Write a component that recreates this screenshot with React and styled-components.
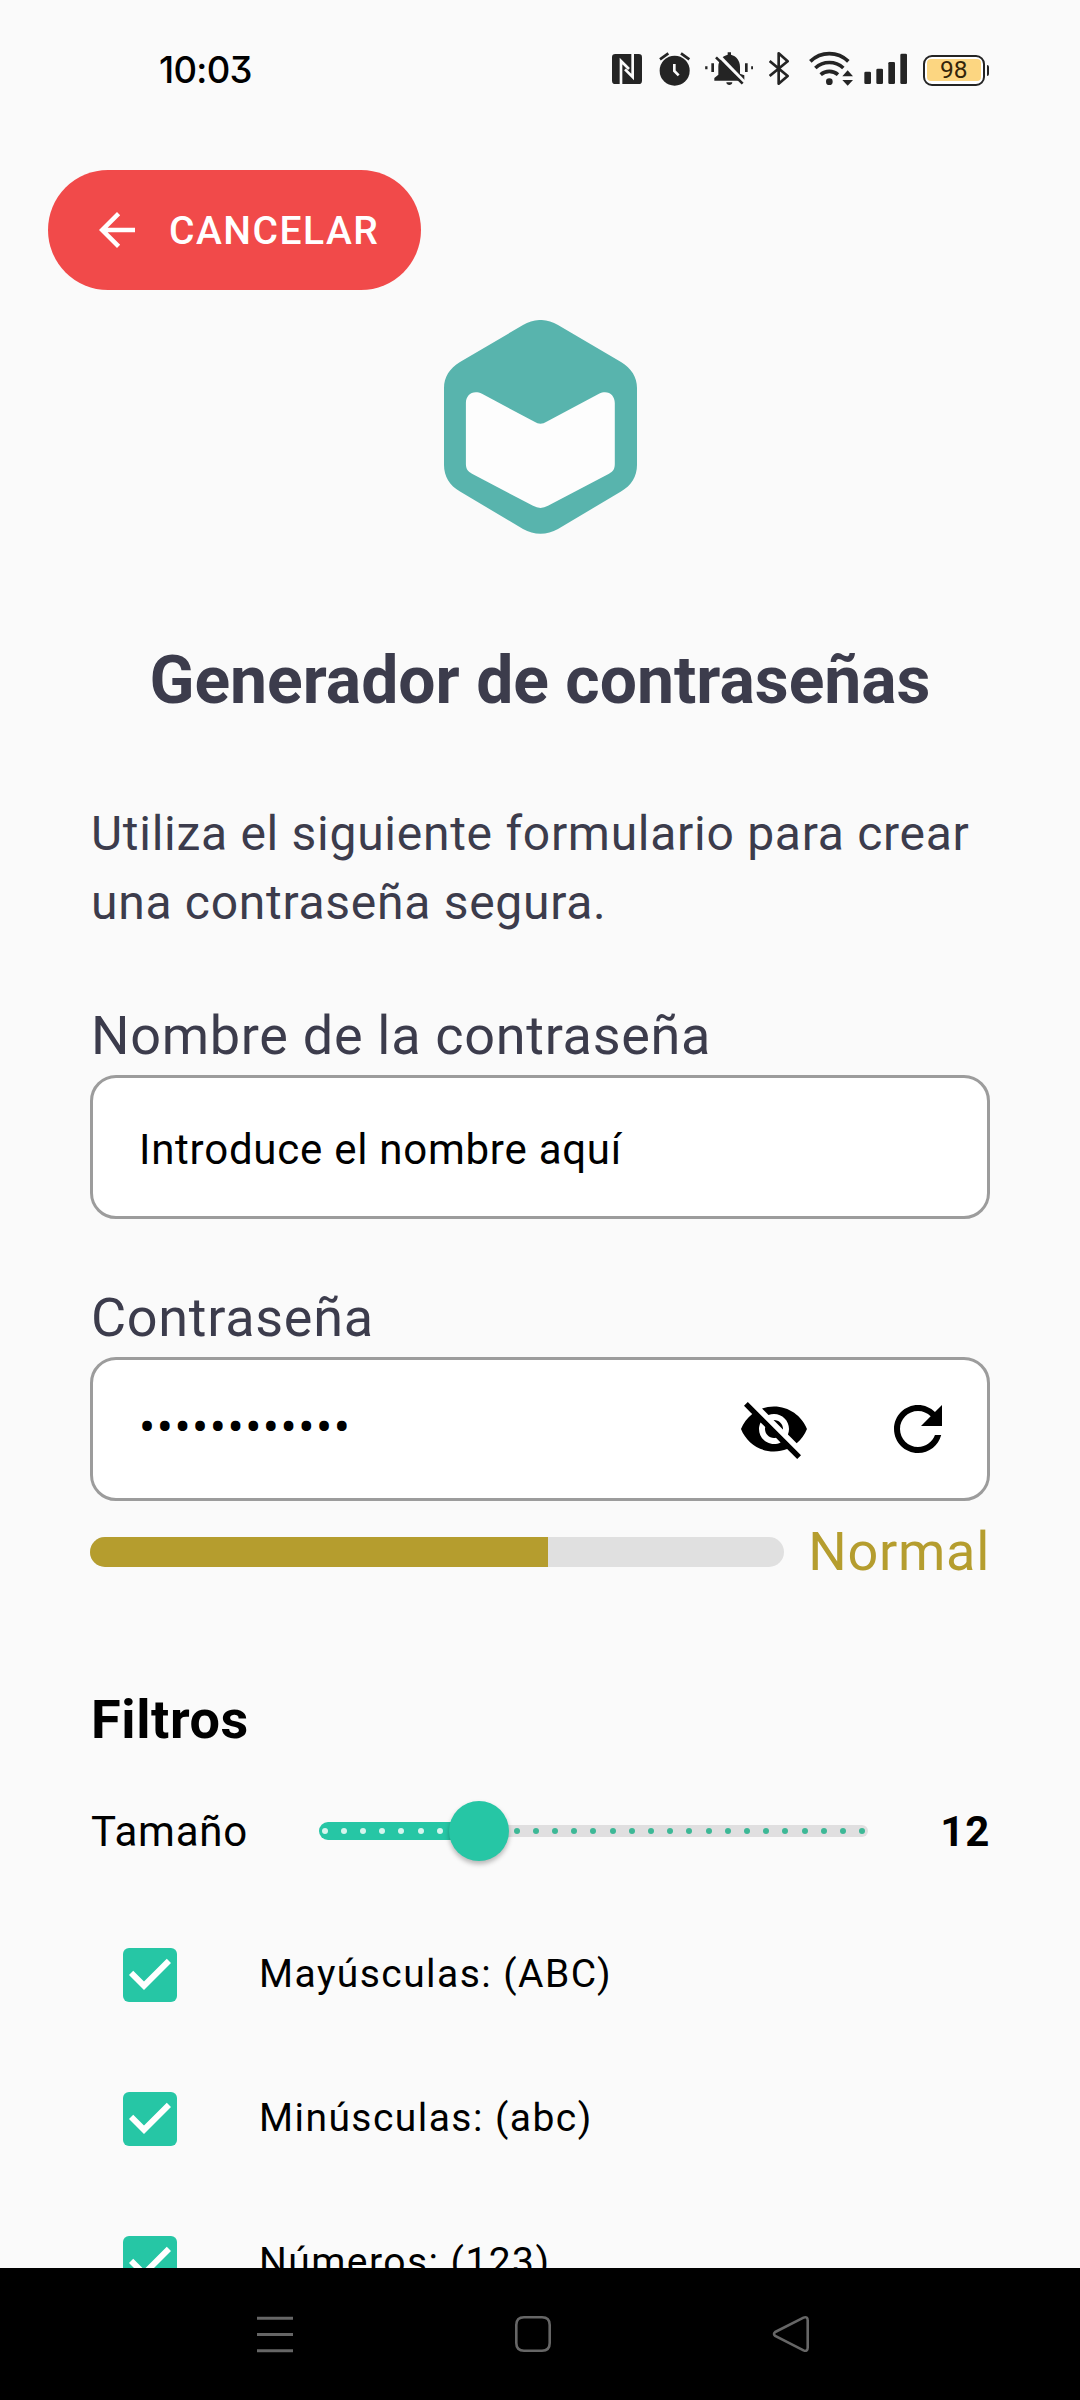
import React from "react";
import styled, { createGlobalStyle } from "styled-components";

const ink = "#3c3c4c";
const teal = "#26c6a5";
const gold = "#b59d2e";
const glyph = "#242424";

const GlobalStyle = createGlobalStyle`
  * { box-sizing: border-box; }
  body { margin: 0; background: #fafafa; font-family: Roboto, "Noto Sans", sans-serif; }
  svg { display: block; flex: none; }
`;

const Phone = styled.div`
  width: 1080px;
  height: 2400px;
  display: flex;
  flex-direction: column;
  overflow: hidden;
  background: #fafafa;
`;

const Screen = styled.div`
  height: 2268px;
  flex: none;
  display: flex;
  flex-direction: column;
  overflow: hidden;
`;

const StatusBar = styled.header`
  height: 140px;
  flex: none;
  padding: 0 91px 0 159px;
  display: flex;
  align-items: center;
  justify-content: space-between;
`;

const Clock = styled.span`
  font: 500 36.5px/44px Inter, Roboto, sans-serif;
  font-feature-settings: "cv09" 1;
  color: #000;
  letter-spacing: -0.7px;
`;

const StatusIcons = styled.div`
  display: flex;
  align-items: center;
`;

const Glyph = styled.svg`
  height: 40px;
  width: ${(p) => p.$w / 3}px;
  margin-right: ${(p) => p.$after / 3}px;
`;

const BatteryCase = styled.div`
  width: 62.5px;
  height: 31px;
  padding: 2.5px;
  border: 2.2px solid #242424;
  border-radius: 9px;
  background: #fff;
`;

const BatteryLevel = styled.div`
  height: 100%;
  border-radius: 4px;
  background: #fcd681;
  display: flex;
  align-items: center;
  justify-content: center;
  font-size: 24.5px;
  line-height: 22px;
  color: #33240a;
`;

const BatteryTip = styled.div`
  width: 2.5px;
  height: 11px;
  margin-left: 1.5px;
  border-radius: 0 2px 2px 0;
  background: #242424;
`;

const CancelButton = styled.button`
  width: 373px;
  height: 120px;
  flex: none;
  margin: 30px 0 0 48px;
  padding: 0 0 0 42px;
  border: 0;
  border-radius: 60px;
  background: #f14a4a;
  color: #fff;
  display: flex;
  align-items: center;
  gap: 25px;
  font: 500 39px/48px Roboto, sans-serif;
  letter-spacing: 1.5px;
`;

const ButtonText = styled.span`
  margin-top: 2px;
`;

const Logo = styled.svg`
  width: 193px;
  height: 214px;
  margin: 30px auto 0 444px;
`;

const Title = styled.h1`
  margin: 108px 0 0;
  text-align: center;
  font-size: 66px;
  font-weight: 700;
  line-height: 78px;
  color: ${ink};
`;

const Form = styled.main`
  padding: 0 90px;
  display: flex;
  flex-direction: column;
`;

const Intro = styled.p`
  margin: 79px -10px 0 1px;
  font-size: 48px;
  line-height: 69px;
  letter-spacing: 0.72px;
  color: ${ink};
`;

const Label = styled.label`
  margin: 67px 0 0 1px;
  font-size: 54px;
  line-height: 63px;
  letter-spacing: 0.7px;
  color: ${ink};
`;

const Field = styled.div`
  height: 144px;
  margin-top: 8px;
  padding: 0 33px 0 46px;
  border: 3px solid #9c9c9c;
  border-radius: 26px;
  background: #fff;
  display: flex;
  align-items: center;
`;

const FieldText = styled.span`
  flex: 1;
  margin-top: 5px;
  font-size: 42px;
  line-height: 50px;
  letter-spacing: 0.75px;
  color: #000;
`;

const Mask = styled.span`
  flex: 1;
  margin-top: -3px;
  font-size: 48px;
  line-height: 56px;
  letter-spacing: 1.5px;
  color: #000;
`;

const FieldActions = styled.div`
  display: flex;
  gap: 72px;
`;

const StrengthRow = styled.div`
  margin-top: 19px;
  height: 63px;
  display: flex;
  align-items: center;
  justify-content: space-between;
`;

const StrengthTrack = styled.div`
  width: 694px;
  height: 30px;
  border-radius: 15px;
  overflow: hidden;
  background: #e0e0e0;
`;

const StrengthFill = styled.div`
  width: ${(p) => p.$percent}%;
  height: 100%;
  background: ${gold};
`;

const StrengthText = styled.span`
  font-size: 54px;
  line-height: 63px;
  letter-spacing: 0.7px;
  color: ${gold};
`;

const SectionTitle = styled.h2`
  margin: 105px 0 0 1px;
  font-size: 54px;
  font-weight: 700;
  line-height: 63px;
  letter-spacing: 0.6px;
  color: #000;
`;

const SizeRow = styled.div`
  margin-top: 50px;
  height: 60px;
  display: grid;
  grid-template-columns: 229px 549px 1fr;
  align-items: center;
  font-size: 42px;
  line-height: 50px;
  letter-spacing: 0.75px;
  color: #000;
`;

const SizeLabel = styled.span`
  padding: 1px 0 0 1px;
`;

const SizeValue = styled.span`
  padding-top: 1px;
  text-align: right;
  font-weight: 700;
`;

const Slider = styled.div`
  position: relative;
  height: 60px;
  display: flex;
  align-items: center;
`;

const ActiveTrack = styled.div`
  width: 160px;
  height: 18px;
  border-radius: 9px 0 0 9px;
  background: ${teal};
`;

const RestTrack = styled.div`
  flex: 1;
  height: 12px;
  border-radius: 0 6px 6px 0;
  background: #e0dfe0;
`;

const Ticks = styled.div`
  position: absolute;
  inset: 27px 2.5px;
  display: flex;
  justify-content: space-between;
`;

const Tick = styled.i`
  width: 6px;
  height: 6px;
  border-radius: 50%;
  background: ${(p) => (p.$on ? "#d6f5ee" : "#3db896")};
`;

const Thumb = styled.div`
  position: absolute;
  left: 129.5px;
  top: 0;
  width: 60px;
  height: 60px;
  border-radius: 50%;
  background: ${teal};
  box-shadow: 0 3px 5px rgba(0, 0, 0, 0.28);
`;

const Options = styled.div`
  margin-top: 42px;
  display: flex;
  flex-direction: column;
`;

const Option = styled.div`
  height: 144px;
  padding-left: 24px;
  display: flex;
  align-items: center;
  gap: 73px;
`;

const OptionText = styled.span`
  margin-top: -3px;
  font-size: 39px;
  line-height: 48px;
  letter-spacing: 1.45px;
  color: #000;
`;

const NavBar = styled.nav`
  height: 132px;
  flex: none;
  padding: 0 270px 0 255px;
  background: #000;
  display: flex;
  align-items: center;
  justify-content: space-between;
`;

const StatusGlyphs = () => (
  <>
    <Glyph $w={90} $after={52} viewBox="96 60 90 120">
      <rect x="96" y="72" width="90" height="90" rx="10" fill={glyph} />
      <path d="M123 164V93L147 117M158 70V141L135 118" fill="none" stroke="#fafafa" strokeWidth="8" />
    </Glyph>
    <Glyph $w={94} $after={42} viewBox="238 60 94 120">
      <circle cx="285" cy="122" r="45" fill={glyph} />
      <path d="M241 88L266 70M329 88L304 70" stroke={glyph} strokeWidth="8" />
      <path d="M284 102V123L297 136" fill="none" stroke="#fafafa" strokeWidth="8" />
    </Glyph>
    <Glyph $w={146} $after={48} viewBox="374 60 146 120">
      <path
        fill={glyph}
        d="M402 152V144L414 134V110C414 92 426 78 442 74V67H452V74C468 78 479 92 479 110V131L492 136V152ZM438 157H456C456 168 438 168 438 157Z"
      />
      <path d="M415 76L496 160" stroke="#fafafa" strokeWidth="10" />
      <path d="M407 82L487 161" stroke={glyph} strokeWidth="8" />
      <path d="M378 109v9M516 109v9" stroke={glyph} strokeWidth="7" />
      <path d="M397 100v26M498 100v26" stroke={glyph} strokeWidth="8" />
    </Glyph>
    <Glyph $w={62} $after={58} viewBox="568 60 62 120">
      <path d="M570 93L624 138L597 161V70L624 94L570 138" fill="none" stroke={glyph} strokeWidth="8" strokeLinejoin="round" />
    </Glyph>
    <Glyph $w={132} $after={32} viewBox="688 60 132 120">
      <path d="M692 94C724 63 774 63 806 94" fill="none" stroke={glyph} strokeWidth="11" />
      <path d="M707 114C731 92 767 92 791 114" fill="none" stroke={glyph} strokeWidth="11" />
      <path d="M723 134C738 121 760 121 775 134" fill="none" stroke={glyph} strokeWidth="11" />
      <circle cx="749" cy="155" r="10" fill={glyph} />
      <path d="M788 139L804 121L820 139ZM788 150H820L804 167Z" fill={glyph} />
    </Glyph>
    <Glyph $w={130} $after={46} viewBox="852 60 130 120">
      <g fill={glyph}>
        <rect x="853" y="125" width="20" height="37" rx="4" />
        <rect x="889" y="116" width="20" height="46" rx="4" />
        <rect x="925" y="96" width="20" height="66" rx="4" />
        <rect x="961" y="71" width="20" height="91" rx="4" />
      </g>
    </Glyph>
  </>
);

const ArrowBack = () => (
  <svg width="54" height="54" viewBox="0 0 24 24" fill="currentColor">
    <path d="M20 11H7.83l5.59-5.59L12 4l-8 8 8 8 1.41-1.41L7.83 13H20v-2z" />
  </svg>
);

const EyeOff = () => (
  <svg width="72" height="72" viewBox="0 0 24 24">
    <path d="M12 7c2.76 0 5 2.24 5 5 0 .65-.13 1.26-.36 1.83l2.92 2.92c1.51-1.26 2.7-2.89 3.43-4.75-1.73-4.39-6-7.5-11-7.5-1.4 0-2.74.25-3.98.7l2.16 2.16C10.74 7.13 11.35 7 12 7zM2 4.27l2.28 2.28.46.46C3.08 8.3 1.78 10.02 1 12c1.73 4.39 6 7.5 11 7.5 1.55 0 3.03-.3 4.38-.84l.42.42L19.73 22 21 20.73 3.27 3 2 4.27zM7.53 9.8l1.55 1.55c-.05.21-.08.43-.08.65 0 1.66 1.34 3 3 3 .22 0 .44-.03.65-.08l1.55 1.55c-.67.33-1.41.53-2.2.53-2.76 0-5-2.24-5-5 0-.79.2-1.53.53-2.2zm4.31-.78l3.15 3.15.02-.16c0-1.66-1.34-3-3-3l-.17.01z" />
  </svg>
);

const Refresh = () => (
  <svg width="72" height="72" viewBox="0 0 24 24">
    <path d="M17.65 6.35C16.2 4.9 14.21 4 12 4c-4.42 0-7.99 3.58-7.99 8s3.57 8 7.99 8c3.73 0 6.84-2.55 7.73-6h-2.08c-.82 2.33-3.04 4-5.65 4-3.31 0-6-2.69-6-6s2.69-6 6-6c1.66 0 3.14.69 4.22 1.78L13 11h7V4l-2.35 2.35z" />
  </svg>
);

const Checkbox = () => (
  <svg width="72" height="72" viewBox="0 0 24 24">
    <rect x="3" y="3" width="18" height="18" rx="2" fill={teal} />
    <path d="M10 17l-5-5 1.41-1.41L10 14.17l7.59-7.59L19 8l-9 9z" fill="#fff" />
  </svg>
);

const options = ["Mayúsculas: (ABC)", "Minúsculas: (abc)", "Números: (123)"];
const minSize = 4;
const maxSize = 32;
const size = 12;

export default function App() {
  const ticks = Array.from({ length: maxSize - minSize + 1 }, (_, i) => minSize + i);
  return (
    <Phone>
      <GlobalStyle />
      <Screen>
        <StatusBar>
          <Clock>10:03</Clock>
          <StatusIcons>
            <StatusGlyphs />
            <BatteryCase>
              <BatteryLevel>98</BatteryLevel>
            </BatteryCase>
            <BatteryTip />
          </StatusIcons>
        </StatusBar>
        <CancelButton>
          <ArrowBack />
          <ButtonText>CANCELAR</ButtonText>
        </CancelButton>
        <Logo viewBox="0 0 193 214">
          <path
            fill="#58b4ad"
            d="M79 5C90-1.7 103-1.7 114 5L177 42C187.5 48.5 193 57 193 68V145C193 156 187.5 165.5 177 171.5L114 209C103 215.3 90 215.3 79 209L16 171.5C5.5 165.5 0 156 0 145V68C0 57 5.5 48.5 16 42Z"
          />
          <path
            fill="#fdfdfd"
            d="M38 73.8L90.5 101.8Q96.5 105.5 102.5 101.8L155 73.8C164 69.5 170.8 75 170.8 83V144C170.8 149 169 151.5 165 153.7L104 185.8Q96.5 190 89 185.8L28 153.7C24 151.5 21.9 149 21.9 144V83C21.9 75 28.8 69.5 38 73.8Z"
          />
        </Logo>
        <Title>Generador de contraseñas</Title>
        <Form>
          <Intro>
            Utiliza el siguiente formulario para crear una contraseña segura.
          </Intro>
          <Label>Nombre de la contraseña</Label>
          <Field>
            <FieldText>Introduce el nombre aquí</FieldText>
          </Field>
          <Label>Contraseña</Label>
          <Field>
            <Mask>{"•".repeat(size)}</Mask>
            <FieldActions>
              <EyeOff />
              <Refresh />
            </FieldActions>
          </Field>
          <StrengthRow>
            <StrengthTrack>
              <StrengthFill $percent={66} />
            </StrengthTrack>
            <StrengthText>Normal</StrengthText>
          </StrengthRow>
          <SectionTitle>Filtros</SectionTitle>
          <SizeRow>
            <SizeLabel>Tamaño</SizeLabel>
            <Slider>
              <ActiveTrack />
              <RestTrack />
              <Ticks>
                {ticks.map((v) => (
                  <Tick key={v} $on={v <= size} />
                ))}
              </Ticks>
              <Thumb />
            </Slider>
            <SizeValue>{size}</SizeValue>
          </SizeRow>
          <Options>
            {options.map((text) => (
              <Option key={text}>
                <Checkbox />
                <OptionText>{text}</OptionText>
              </Option>
            ))}
          </Options>
        </Form>
      </Screen>
      <NavBar>
        <svg width="39" height="39" viewBox="0 0 39 39" stroke="#666" strokeWidth="3">
          <path d="M2 3.2H38M2 19.5H38M2 35.8H38" />
        </svg>
        <svg width="38" height="38" viewBox="0 0 38 38" fill="none" stroke="#666" strokeWidth="2.6">
          <path d="M10 2.3H28Q35.7 2.3 35.7 10V28Q35.7 35.7 28 35.7H10Q2.3 35.7 2.3 28V10Q2.3 2.3 10 2.3Z" />
        </svg>
        <svg width="38" height="38" viewBox="0 0 38 38" fill="none" stroke="#666" strokeWidth="2.6">
          <path d="M3.2 17L31.5 2.6Q35.7 1 35.7 5.5V32.5Q35.7 37 31.5 35.4L3.2 21Q0.8 19 3.2 17Z" />
        </svg>
      </NavBar>
    </Phone>
  );
}
